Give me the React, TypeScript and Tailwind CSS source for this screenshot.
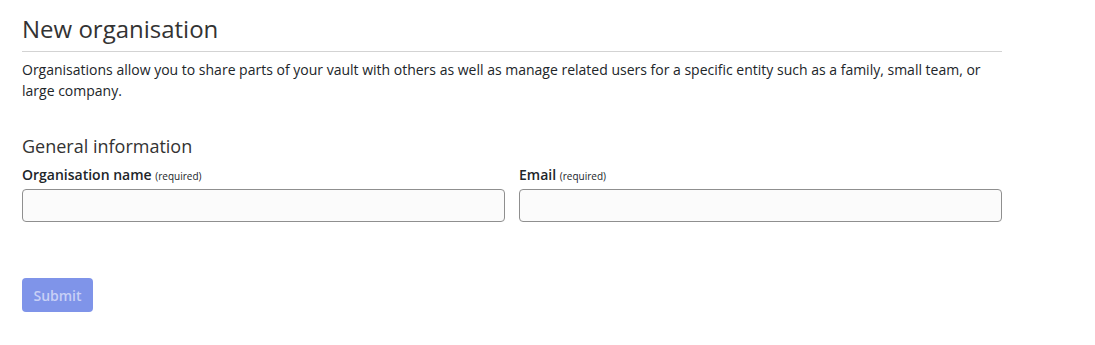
export default function App() {
  return (
    <main className="min-h-[345px] bg-white px-[22px] text-[#212529]" style={{ fontFamily: '"Open Sans", "Liberation Sans", sans-serif' }}>
      <div className="w-[980px]">
        <div className="border-b border-[#d3d3d3] pt-[14px] pb-[7px]">
          <h1 className="text-[24px] leading-[30px] font-normal text-[#333]">New organisation</h1>
        </div>
        <p className="mt-[7px] text-[14px] leading-[21px] text-[#212529]">
          Organisations allow you to share parts of your vault with others as well as manage related users for a specific entity such as a family, small team, or large company.
        </p>

        <form className="mt-[32px]">
          <h2 className="text-[18px] leading-[26px] font-normal text-[#333]">General information</h2>
          <div className="mt-[5px] grid grid-cols-2 gap-[14px]">
            <div>
              <label className="block text-[14px] leading-[21px] font-semibold text-[#212529]">
                Organisation name <span className="text-[10px] font-normal">(required)</span>
              </label>
              <input type="text" className="mt-[2px] block h-[33px] w-full rounded-[4px] border border-[#8f8f8f] bg-[#fbfbfb] px-3 text-[14px] outline-none" />
            </div>
            <div>
              <label className="block text-[14px] leading-[21px] font-semibold text-[#212529]">
                Email <span className="text-[10px] font-normal">(required)</span>
              </label>
              <input type="email" className="mt-[2px] block h-[33px] w-full rounded-[4px] border border-[#8f8f8f] bg-[#fbfbfb] px-3 text-[14px] outline-none" />
            </div>
          </div>

          <button
            type="submit"
            disabled
            className="mt-[56px] h-[34px] w-[71px] rounded-[4px] bg-[#7f94e9] text-[14px] font-semibold text-[#c8d0f6]"
          >
            Submit
          </button>
        </form>
      </div>
    </main>
  );
}
